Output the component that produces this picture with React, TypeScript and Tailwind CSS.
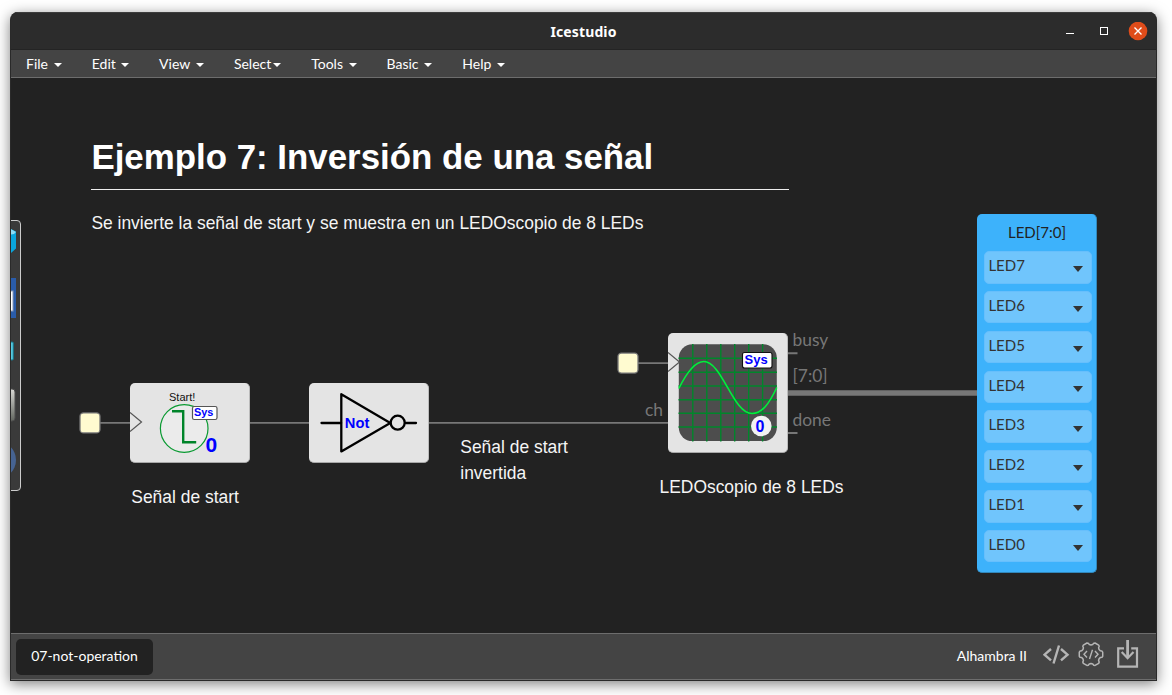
import React from "react";

const MENU = [
  { label: "File", width: "w-[36px]" },
  { label: "Edit", width: "w-[37.5px]" },
  { label: "View", width: "w-[45px]" },
  { label: "Select", width: "w-[47.5px]" },
  { label: "Tools", width: "w-[45.5px]" },
  { label: "Basic", width: "w-[46px]" },
  { label: "Help", width: "w-[43px]" },
];

const LEDS = ["LED7", "LED6", "LED5", "LED4", "LED3", "LED2", "LED1", "LED0"];

// Outline of a six-toothed gear centred on (cx, cy).
function gearPoints(cx: number, cy: number) {
  const profile = [
    [-20, 9.9],
    [-16, 11.4],
    [-10, 11.9],
    [10, 11.9],
    [16, 11.4],
    [20, 9.9],
    [30, 9.3],
  ];
  return [0, 60, 120, 180, 240, 300]
    .flatMap((base) =>
      profile.map(([offset, r]) => {
        const a = ((base + offset) * Math.PI) / 180;
        return `${(cx + r * Math.cos(a)).toFixed(2)},${(cy + r * Math.sin(a)).toFixed(2)}`;
      })
    )
    .join(" ");
}

function TitleBar() {
  return (
    <header className="grid h-[38px] shrink-0 grid-cols-[1fr_auto_1fr] items-center border-t border-[#3d3d3d] bg-[#2c2c2c] shadow-[inset_0_-1px_0_#242424]">
      <span />
      <h1 className="font-['Noto_Sans',sans-serif] text-[14px] leading-5 font-bold tracking-[0.12px] text-white">
        Icestudio
      </h1>
      <svg width="90" height="20" viewBox="1066 22 90 20" className="justify-self-end" fill="none">
        <path d="M1066 33.5h8" stroke="#fff" />
        <rect x="1100.5" y="27.5" width="7" height="7" stroke="#fff" />
        <circle cx="1138" cy="31" r="9.3" fill="#e04c1a" />
        <path d="M1134.5 27.5l7 7m0-7l-7 7" stroke="#fff" strokeWidth="1.4" />
      </svg>
    </header>
  );
}

function MenuBar() {
  return (
    <nav className="flex h-[28px] shrink-0 items-center gap-[29.8px] border-b border-[#6d6d6d] bg-[#444] pl-[15px] text-[14px] text-white">
      {MENU.map((m) => (
        <button key={m.label} className={`flex items-center justify-between ${m.width}`}>
          <span>{m.label}</span>
          <svg width="8" height="4" viewBox="0 0 8 4" className="mt-[2px]">
            <path d="M0 0h8L4 4z" fill="#fff" />
          </svg>
        </button>
      ))}
    </nav>
  );
}

function Toolbox() {
  return (
    <div className="absolute top-[220px] left-[6px] h-[271px] w-[15px] rounded-[4px] border border-[#ccc] bg-[#3a3a3a]">
      <svg width="13" height="269" viewBox="7 221 13 269">
        <defs>
          <linearGradient id="steel" x1="0" y1="0" x2="0" y2="1">
            <stop offset="0" stopColor="#d8d8d4" />
            <stop offset="1" stopColor="#62665f" />
          </linearGradient>
        </defs>
        <path d="M7 227l9 4.5v17l-9 8z" fill="#0aa5dc" />
        <path d="M9 228l7 4-2 2-5 1z" fill="#8edcf5" />
        <rect x="7" y="278" width="9" height="40" fill="#2a5caa" />
        <rect x="7" y="291" width="6" height="20" fill="#fff" stroke="#8a9ab8" />
        <rect x="4" y="342" width="9.3" height="18" rx="1" fill="#55c8e0" stroke="#147488" />
        <rect x="4" y="389" width="11" height="32" rx="3" fill="url(#steel)" stroke="#4e4e4e" />
        <circle cx="-3" cy="460" r="19" fill="#466392" />
      </svg>
    </div>
  );
}

function Wires() {
  return (
    <svg className="absolute top-0 left-0" width="1172" height="695" stroke="#777" fill="none">
      <path d="M99 422.9h32M249 422.9h61M428 422.9h241M636 363.1h33M787 353.2h10.5M787 433h10.5" strokeWidth="1.9" />
      <path d="M787 393h190" strokeWidth="5.4" />
      <g fill="#fffbd0" strokeWidth="1.3">
        <rect x="80" y="412.9" width="20" height="20" rx="3.5" />
        <rect x="618" y="353.1" width="20" height="20" rx="3.5" />
      </g>
    </svg>
  );
}

function StartBlock() {
  return (
    <div className="absolute top-[383px] left-[130px] h-[80px] w-[120px] rounded-[5px] border-r border-b border-r-[#bbb] border-b-[#a8a8a8] bg-[#e4e4e4]">
      <svg width="119" height="80" viewBox="130 383 119 80" fontFamily="Liberation Sans, sans-serif" fill="none">
        <path d="M130 412.5l11.5 9.5-11.5 9.5" stroke="#555" strokeWidth="1.2" />
        <text x="169" y="401" fontSize="11" fill="#111">Start!</text>
        <circle cx="184.2" cy="428.5" r="23.8" fill="#ebebeb" stroke="#0a9a32" strokeWidth="1.2" />
        <path d="M172 411.3h11.2v31h13" stroke="#00842a" strokeWidth="2.4" />
        <rect x="192.5" y="406.5" width="24.5" height="13" rx="1.8" fill="#fff" stroke="#555" strokeWidth="1.2" />
        <text x="194" y="416.2" fontSize="10.9" fontWeight="700" fill="#00f">Sys</text>
        <text x="205.5" y="451.8" fontSize="21" fontWeight="700" fill="#00f">0</text>
      </svg>
    </div>
  );
}

function NotBlock() {
  return (
    <div className="absolute top-[383px] left-[309px] h-[80px] w-[120px] rounded-[5px] border-r border-b border-r-[#bbb] border-b-[#a8a8a8] bg-[#e4e4e4]">
      <svg width="119" height="80" viewBox="309 383 119 80" fill="none" stroke="#000" strokeWidth="2.3" strokeLinecap="round" strokeLinejoin="round">
        <path d="M321.5 423h20M341.3 394.2v57.2l49-28.4zM405.5 423h10.5" />
        <circle cx="397.7" cy="422.7" r="7" />
        <text x="344.8" y="427.8" fontSize="14.7" fontWeight="700" fill="#00f" stroke="none" fontFamily="Liberation Sans, sans-serif">Not</text>
      </svg>
    </div>
  );
}

function ScopeBlock() {
  return (
    <div className="absolute top-[333px] left-[668px] h-[120px] w-[120px] rounded-[5px] border-r border-b border-r-[#bbb] border-b-[#a8a8a8] bg-[#e4e4e4]">
      <svg width="119" height="120" viewBox="668 333 119 120" fill="none" fontFamily="Liberation Sans, sans-serif" fontWeight="700">
        <rect x="678.8" y="344.3" width="98" height="96.8" rx="13.5" fill="#4d4d4d" />
        <path
          d="M692.8 344v97.5M706.8 344v97.5M720.8 344v97.5M734.7 344v97.5M748.7 344v97.5M762.6 344v97.5M678.5 358.3h98.5M678.5 372.2h98.5M678.5 386h98.5M678.5 399.7h98.5M678.5 413.3h98.5M678.5 427h98.5"
          stroke="#00862b"
          strokeWidth="1.4"
        />
        <path d="M678.8 388.5C688 370 696 361.5 703.8 361.5C722 361.5 733 413.5 752 413.5C762 413.5 769 404 776.8 387.5" stroke="#00f03c" strokeWidth="1.6" />
        <path d="M668 352.5l11.5 9.5-11.5 9.5" stroke="#555" strokeWidth="1.2" />
        <rect x="742.5" y="352.5" width="29.5" height="15.5" rx="2" fill="#fff" stroke="#111" strokeWidth="1.1" />
        <text x="744.5" y="364.3" fontSize="13" fill="#00f">Sys</text>
        <circle cx="761.3" cy="426" r="10.3" fill="#f2f2f2" />
        <text x="755.6" y="431.8" fontSize="16" fill="#00f">0</text>
      </svg>
    </div>
  );
}

function LedPanel() {
  return (
    <div className="absolute top-[214px] left-[977px] flex h-[359px] w-[120px] flex-col rounded-[5px] border-r border-b border-[#3287ba] bg-[#3db2fb] pr-[4px] pl-[7px] text-[15px] text-[#333]">
      <div className="flex h-[37px] items-center justify-center pr-[2px] text-[#222]">LED[7:0]</div>
      <div className="flex flex-col gap-[7.35px]">
        {LEDS.map((led) => (
          <div
            key={led}
            className="flex h-[32.5px] items-center justify-between rounded-[5px] border border-[#67bffc] bg-[#70c5fc] pr-[8px] pl-[3.4px]"
          >
            <span className="-mt-[4px]">{led}</span>
            <svg width="10" height="6" viewBox="0 0 10 6" className="mt-[4px]">
              <path d="M0 0h10L5 6z" fill="#333" />
            </svg>
          </div>
        ))}
      </div>
    </div>
  );
}

function Canvas() {
  const note = "absolute whitespace-nowrap font-['Liberation_Sans',sans-serif] text-[17.43px] leading-[26px] text-[#f5f5f5]";
  const port = "absolute whitespace-nowrap text-[17.4px] leading-5 text-[#777]";
  return (
    <main className="relative min-h-0 flex-1 overflow-hidden bg-[#222]">
      <div className="absolute -top-[78px] -left-[11px] h-[695px] w-[1172px]">
        <Toolbox />
        <h2 className="absolute top-[137px] left-[91.4px] w-[697.4px] border-b border-[#eee] pb-[12px] font-['Liberation_Sans',sans-serif] text-[34.86px] leading-[40px] font-bold whitespace-nowrap text-white">
          Ejemplo 7: Inversión de una señal
        </h2>
        <p className={`top-[210px] left-[91.4px] ${note}`}>Se invierte la señal de start y se muestra en un LEDOscopio de 8 LEDs</p>
        <Wires />
        <StartBlock />
        <NotBlock />
        <ScopeBlock />
        <LedPanel />
        <span className={`top-[400px] left-[645px] ${port}`}>ch</span>
        <span className={`top-[330px] left-[792.5px] ${port}`}>busy</span>
        <span className={`top-[366px] left-[792.5px] ${port}`}>[7:0]</span>
        <span className={`top-[410px] left-[792.5px] ${port}`}>done</span>
        <p className={`top-[484px] left-[131.3px] ${note}`}>Señal de start</p>
        <p className={`top-[434px] left-[460.3px] ${note}`}>
          Señal de start
          <br />
          invertida
        </p>
        <p className={`top-[474px] left-[659.5px] ${note}`}>LEDOscopio de 8 LEDs</p>
      </div>
    </main>
  );
}

function Footer() {
  return (
    <footer className="flex h-[47px] shrink-0 items-start justify-between border-y border-[#6d6d6d] bg-[#444] pt-[5px] pr-[17px] pl-[5px] text-[14px] text-white">
      <div className="flex h-[36px] w-[137px] items-center justify-center rounded-[5px] bg-[#222] pb-[3px]">07-not-operation</div>
      <div className="flex h-[34px] items-center">
        <span className="mr-[16px] pb-[2px]">Alhambra II</span>
        <svg width="96" height="32" viewBox="1043 640 96 32" fill="none" stroke="#b5b5b5">
          <path d="M1051 649l-6.5 5.7 6.5 5.7M1061 649l6.5 5.7-6.5 5.7M1059 645.5l-5.5 18" strokeWidth="2.4" />
          <polygon points={gearPoints(1091, 654.2)} strokeWidth="1.5" strokeLinejoin="round" />
          <path d="M1087 651l-3 3.2 3 3.2M1095 651l3 3.2-3 3.2M1092.5 649.7l-3 9.3" strokeWidth="1.4" />
          <path d="M1124 648.3h-5.8v18.4h18.8v-18.4h-5.8" strokeWidth="2.2" />
          <path d="M1127.6 640v18" strokeWidth="2.8" />
          <path d="M1121.7 652l5.9 6.2 5.9-6.2" strokeWidth="2.2" />
        </svg>
      </div>
    </footer>
  );
}

export default function App() {
  return (
    <div className="h-[695px] w-[1172px] overflow-hidden bg-white pt-[12px] pl-[10px] font-['Lato',sans-serif]">
      <div className="flex h-[669px] w-[1147px] flex-col overflow-hidden rounded-t-[8px] border-x border-b border-[#2a2a2a] bg-[#222] shadow-[0_3px_14px_rgba(0,0,0,0.5)]">
        <TitleBar />
        <MenuBar />
        <Canvas />
        <Footer />
      </div>
    </div>
  );
}
